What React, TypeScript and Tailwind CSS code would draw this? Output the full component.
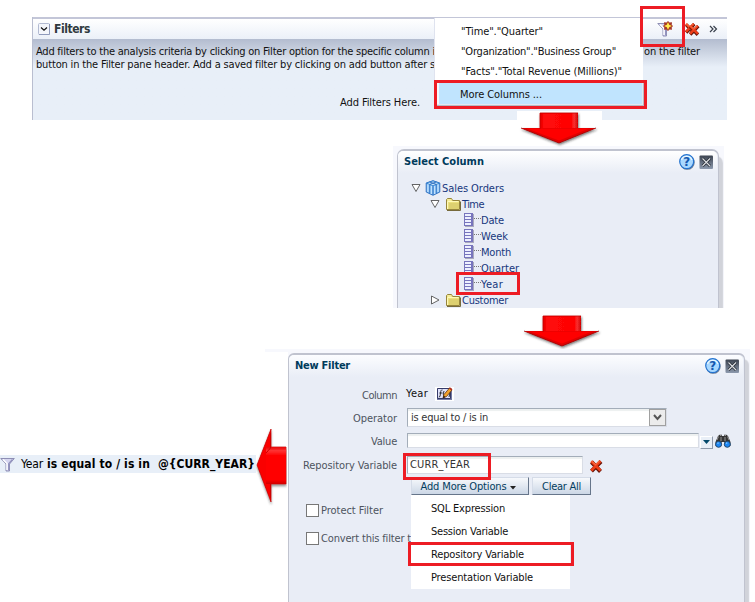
import { useLayoutEffect, useRef, useState } from "react";

type TextProps = { children: string; w: number; className?: string };

/** A single line of text whose tracking is adjusted so that it spans `w` pixels. */
function T({ children, w, className = "" }: TextProps) {
  const ref = useRef<HTMLSpanElement>(null);
  const [tracking, setTracking] = useState(0);
  useLayoutEffect(() => {
    if (ref.current) {
      const natural = ref.current.getBoundingClientRect().width;
      setTracking((w - natural) / children.length);
    }
  }, [w, children]);
  return (
    <span ref={ref} className={`inline-block whitespace-pre ${className}`} style={{ letterSpacing: tracking }}>
      {children}
    </span>
  );
}

function DownArrow({ id }: { id: string }) {
  return (
    <svg width="82" height="36" viewBox="0 0 82 36" className="block">
      <defs>
        <linearGradient id={id} x1="0" x2="1">
          <stop offset="0" stopColor="#e00000" />
          <stop offset="0.1" stopColor="#ff0808" />
          <stop offset="0.83" stopColor="#ff0505" />
          <stop offset="0.9" stopColor="#f83030" />
          <stop offset="1" stopColor="#d00000" />
        </linearGradient>
        <filter id={`${id}s`} x="-10%" y="-10%" width="120%" height="130%">
          <feDropShadow dx="0.8" dy="1.5" stdDeviation="1.2" floodColor="#222" floodOpacity="0.6" />
        </filter>
      </defs>
      <g filter={`url(#${id}s)`}>
        <path d="M2 17H21V2H59V17H77L40 32Z" fill="#e00000" />
        <path d="M21 2H59V17H21Z" fill={`url(#${id})`} />
        <path d="M8 17.500H70L40 29.500Z" fill="#fe0404" />
        <path d="M21 18V2H59" fill="none" stroke="#c40000" strokeWidth=".8" />
        <path d="M2 17L40 32L77 17" fill="none" stroke="#a00000" strokeWidth=".8" />
      </g>
    </svg>
  );
}

function LeftArrow() {
  return (
    <svg width="31" height="78" viewBox="0 0 31 78" className="block">
      <defs>
        <linearGradient id="la" x1="0" x2="0" y1="0" y2="1">
          <stop offset="0" stopColor="#e50000" />
          <stop offset="0.1" stopColor="#ff3434" />
          <stop offset="0.22" stopColor="#ff0505" />
          <stop offset="0.88" stopColor="#ff0303" />
          <stop offset="1" stopColor="#d00000" />
        </linearGradient>
        <filter id="ls" x="-10%" y="-10%" width="120%" height="120%">
          <feDropShadow dx="0" dy="2" stdDeviation="1" floodColor="#333" floodOpacity="0.5" />
        </filter>
      </defs>
      <g filter="url(#ls)">
        <path d="M15 1V19H30V56H15V74L1 37Z" fill="#fa0303" stroke="#c00000" strokeWidth=".7" />
        <path d="M10 19H30V56H10Z" fill="url(#la)" />
        <path d="M14.500 5V20L10 25M14.500 56V70" fill="none" stroke="#d00000" strokeWidth="1" />
      </g>
    </svg>
  );
}

function Funnel({ star = false }: { star?: boolean }) {
  return (
    <svg width="17" height="16" viewBox="0 0 17 16" className="block shrink-0">
      <path d="M.8 2.500H14.300L9.500 8V15H6V8Z" fill="#d6d6f0" stroke="#8585ad" strokeWidth=".9" />
      <path d="M3 3.500L7 7.500V14" fill="none" stroke="#fff" strokeWidth="1.400" />
      <path d="M12.500 3.500L8.700 7.700V14.500" fill="none" stroke="#9494bf" strokeWidth="1.400" />
      {star && (
        <>
          <path d="M11 0L12.500 1.500L15 1.300L14.700 3.700L16 5L14.700 6.500L15 8.700L12.500 8.500L11 10L9.500 8.500L7 8.700L7.300 6.500L6 5L7.300 3.700L7 1.300L9.500 1.500Z" fill="#a5382a" />
          <path d="M11 1L12.200 3.800L15 5L12.200 6.200L11 9L9.800 6.200L7 5L9.800 3.800Z" fill="#ffdb22" />
          <path d="M11 2.700V7.300M8.700 5H13.300" stroke="#fff570" />
        </>
      )}
    </svg>
  );
}

function RedX({ size = 14 }: { size?: number }) {
  return (
    <svg width={size} height={size} viewBox="0 0 14 14" className="block shrink-0">
      <path d="M2.500 3L11.500 12.500M12 2.500L2.500 12.200" stroke="#651408" strokeWidth="4" />
      <path d="M2.300 2.300L11.500 11.500M11.500 2L2.300 11.500" stroke="#ed3d18" strokeWidth="2.800" />
      <path d="M2.500 2L6.500 5.800L10.500 2" fill="none" stroke="#ff8b62" strokeWidth=".9" />
    </svg>
  );
}

function DialogButtons() {
  return (
    <div className="flex gap-[4px]">
      <svg width="16" height="16" viewBox="0 0 16 16">
        <circle cx="8.300" cy="8.400" r="7.400" fill="#6b7d94" />
        <circle cx="7.700" cy="7.600" r="7" fill="#a9d8ff" stroke="#2573cf" strokeWidth="1.200" />
        <path d="M2.500 6a5.500 5.500 0 0 1 10.400 0" fill="none" stroke="#e8f7ff" strokeWidth="1.300" />
        <text x="7.700" y="12" textAnchor="middle" fontSize="12" fontWeight="bold" fontFamily="DejaVu Sans" fill="#1458b0">?</text>
      </svg>
      <svg width="15" height="16" viewBox="0 0 15 16">
        <defs>
          <linearGradient id="closeBg" x1="0" x2="0" y1="0" y2="1">
            <stop stopColor="#3c4350" />
            <stop offset="1" stopColor="#8c99ad" />
          </linearGradient>
        </defs>
        <rect x=".5" y="1.500" width="13.500" height="13.500" rx="1" fill="url(#closeBg)" />
        <path d="M3.500 4.500L11 12M11 4.500L3.500 12" stroke="#242a33" strokeWidth="2.800" />
        <path d="M3.500 4.500L11 12M11 4.500L3.500 12" stroke="#dcdee2" strokeWidth="1.200" />
      </svg>
    </div>
  );
}

function Triangle({ open = true }: { open?: boolean }) {
  return (
    <svg width="10" height="10" viewBox="0 0 10 10" className="shrink-0">
      <path d={open ? "M1 1.500H9L5 8.500Z" : "M1.500 1V9L9 5Z"} fill="#fff" stroke="#555" strokeWidth=".9" />
    </svg>
  );
}

function Folder() {
  return (
    <svg width="15" height="13" viewBox="0 0 15 13" className="shrink-0">
      <path d="M.5 11.500V1.500L1.500 .5H5.500L6.700 2.500H13.500V11.500Z" fill="#ece07c" stroke="#96853c" />
      <path d="M1.500 2H5.500M1.500 11V3.500H12.500" fill="none" stroke="#fff9b8" />
      <path d="M3 5H13V11H3Z" fill="#ddd070" />
      <path d="M1 12.500H14.500V3.500" fill="none" stroke="#766a3c" />
    </svg>
  );
}

function Cube() {
  return (
    <svg width="16" height="16" viewBox="0 0 16 16" className="shrink-0">
      <path d="M8 .7L14.800 3V12L8 15.300L1.200 12V3Z" fill="#82bcf0" stroke="#2469bd" strokeWidth=".9" />
      <path d="M8 1L14.300 3.200L8 5.500L1.700 3.200Z" fill="#e3f5ff" stroke="#2d7dce" strokeWidth=".8" />
      <path d="M8 5.500V15M4.700 2L11.200 4.300V13.500M11.200 2L4.800 4.300V13.500" fill="none" stroke="#2469bd" strokeWidth=".9" />
      <path d="M2.900 4.500V12M6.300 6V14M9.700 6V14M13 4.500V12" stroke="#c8e6ff" strokeWidth="1.200" />
    </svg>
  );
}

function ColumnIcon() {
  return (
    <svg width="17" height="14" viewBox="0 0 17 14" className="shrink-0">
      <path d="M1 1H10V14H1Z" fill="#a9a9bd" />
      <path d="M0 0H9V13H0Z" fill="#7775bd" />
      <path d="M1 1H7V3H1ZM1 4H7V6H1ZM1 7H7V9H1ZM1 10H7V12H1Z" fill="#edf0ff" />
      <path d="M10 5.500H17" stroke="#777" strokeDasharray="1 1" />
    </svg>
  );
}

function EditFormula() {
  return (
    <svg width="19" height="14" viewBox="0 0 19 14" className="block bg-white">
      <path d="M2 1.500H17V13H2Z" fill="#747ba4" />
      <path d="M2.500 1.500H15.500V11.500H2.500Z" fill="#dfe2fb" stroke="#343a69" />
      <path d="M7.500 3C6 2.500 5.800 4 5.500 6L5 9.500L3.800 10M4.300 6H7.500M9 4Q7.500 7 9 10M13 6L10 9.500M14 4Q15.500 7 14 10" fill="none" stroke="#222" strokeWidth=".9" />
      <path d="M8 11L9 7.500L14.500 1L17 3L11.500 9.500Z" fill="#f2a22c" stroke="#633311" strokeWidth=".8" />
      <path d="M14.500 .8L17 2.800" stroke="#b82d1c" strokeWidth="1.500" />
      <path d="M8 11L8.700 8.700L10.500 10Z" fill="#171717" />
    </svg>
  );
}

function Binoculars() {
  return (
    <svg width="16" height="14" viewBox="0 0 16 14" className="block">
      <path d="M3 2L4.500 .7H7V2H9V.7H11.500L13 2L15.500 8V12H9.500V8H6.500V12H.5V8Z" fill="#353535" />
      <path d="M3.500 2.500L2 6M12.500 2.500L14 6M6 3V7M10 3V7M5 1.500H6.500M9.500 1.500H11" stroke="#a1a1a1" strokeWidth=".9" />
      <circle cx="3.600" cy="10.300" r="3" fill="#1c86f5" stroke="#24496d" />
      <circle cx="12.300" cy="10.300" r="3" fill="#1c86f5" stroke="#24496d" />
      <path d="M2.500 9.500L3.500 8.700M11.200 9.500L12.200 8.700" stroke="#8fd0ff" strokeWidth="1.200" />
    </svg>
  );
}

function FiltersPanel() {
  return (
    <section className="relative mt-[17px] ml-[32px] h-[103px] w-[695px] border-l border-[#b9bed0] bg-[#e8eff8]">
      <header className="flex h-[22px] items-center border-t-2 border-[#c3c6d8] bg-gradient-to-b from-white to-[#ebf0f8] pl-[5px]">
        <svg width="12" height="12" viewBox="0 0 12 12">
          <rect x=".5" y=".5" width="11" height="11" rx="1" fill="#f4f6fb" stroke="#b3bbd2" />
          <path d="M1 11.500H11.500V1" fill="none" stroke="#8f9abb" />
          <path d="M3 4.500L6 7.300L9 4.500" fill="none" stroke="#111" strokeWidth="1.200" />
        </svg>
        <T w={36} className="ml-[4px] text-[12px] font-bold text-[#303a40]">Filters</T>
        <div className="ml-auto flex items-center pr-[9px]">
          <Funnel star />
          <span className="ml-[10px] flex w-[17px]">
            <RedX size={12} />
            <span className="mt-[2px] -ml-[8px]"><RedX size={12} /></span>
          </span>
          <svg width="9" height="8" viewBox="0 0 9 8" className="ml-[8px]">
            <path d="M1 1L4 4L1 7M4.500 1L7.500 4L4.500 7" fill="none" stroke="#39404c" strokeWidth="1.200" />
          </svg>
        </div>
      </header>
      <div className="h-[81px] bg-gradient-to-b from-[#b3bccf] to-[#e8eff8] to-[28px] pt-[6px] pl-[3px]">
        <div className="flex h-[13px] items-center">
          <T w={399}>Add filters to the analysis criteria by clicking on Filter option for the specific column i</T>
          <T w={56} className="ml-[209px]">on the filter</T>
        </div>
        <div className="flex h-[13px] items-center">
          <T w={399}>button in the Filter pane header. Add a saved filter by clicking on add button after s</T>
        </div>
        <div className="mt-[25px] ml-[304px] flex h-[14px] items-center">
          <T w={80}>Add Filters Here.</T>
        </div>
      </div>
      {/* Column menu opened from the funnel button */}
      <div className="absolute top-[1px] left-[401px] h-[88px] w-[209px] border-l border-[#dfe3ef] bg-white pt-[4px] pl-[26px]">
        <div className="flex h-[20px] items-center"><T w={82}>"Time"."Quarter"</T></div>
        <div className="flex h-[20px] items-center"><T w={155}>"Organization"."Business Group"</T></div>
        <div className="flex h-[20px] items-center"><T w={161}>"Facts"."Total Revenue (Millions)"</T></div>
      </div>
      <div className="absolute top-[63px] left-[401px] flex h-[29px] w-[213px] items-center border-3 border-[#ed1c24] bg-[#c0e4fe] pl-[23px] shadow-[inset_-1px_-1px_0_#b5bac4,inset_-2px_-2px_0_#e4e8ef,inset_2px_-2px_0_#f4f8fc]">
        <T w={82}>More Columns ...</T>
      </div>
      <div className="absolute -top-[11px] left-[607px] h-[41px] w-[45px] border-3 border-[#ed1c24]" />
    </section>
  );
}

function SelectColumnDialog() {
  return (
    <section className="ml-[393px] h-[162px] w-[331px] overflow-hidden bg-[#f7f8fd] pt-[3px] pl-[4px]">
      <div className="h-[170px] w-[322px] rounded-t-[7px] border border-t-2 border-[#c0c3cf] bg-[#e9edf6] pr-px shadow-[4px_7px_1px_#d1d3da]">
        <header className="flex h-[22px] items-center justify-between rounded-t-[5px] bg-gradient-to-b from-white to-[#e9edf6] pr-[3px] pl-[6px]">
          <T w={80} className="font-bold text-[#003b5c]">Select Column</T>
          <DialogButtons />
        </header>
        <div className="mt-[7px] text-[#17377d]">
          <div className="flex h-[16px] items-center pl-[13px]">
            <Triangle /><span className="ml-[4px] flex"><Cube /></span><T w={62} className="mt-[2px] ml-[1px]">Sales Orders</T>
          </div>
          <div className="flex h-[16px] items-center pl-[32px]">
            <Triangle /><span className="ml-[6px] flex"><Folder /></span><T w={22} className="mt-[2px] ml-[1px]">Time</T>
          </div>
          <Leaf label="Date" w={23} />
          <Leaf label="Week" w={27} />
          <Leaf label="Month" w={30} />
          <Leaf label="Quarter" w={38} />
          <div className="relative">
            <Leaf label="Year" w={22} />
            <div className="absolute -top-[4px] left-[58px] h-[23px] w-[64px] border-3 border-[#ed1c24]" />
          </div>
          <div className="flex h-[16px] items-center pl-[32px]">
            <Triangle open={false} /><span className="ml-[6px] flex"><Folder /></span><T w={46} className="mt-[2px] ml-[1px]">Customer</T>
          </div>
        </div>
      </div>
    </section>
  );
}

function Leaf({ label, w }: { label: string; w: number }) {
  return (
    <div className="flex h-[16px] items-center pl-[66px]">
      <ColumnIcon /><T w={w} className="mt-[2px]">{label}</T>
    </div>
  );
}

function Label({ children, w }: { children: string; w: number }) {
  return (
    <div className="flex w-[108px] shrink-0 justify-end pt-[2px] text-[#4d545e]"><T w={w}>{children}</T></div>
  );
}

const field = "border border-[#d9dde6] border-t-[#a3adb9] border-l-[#a3adb9] bg-white shadow-[inset_0_2px_1px_#edf0f0]";
const button = "flex h-[18px] items-center justify-center border border-t-[#d5dce8] border-l-[#d5dce8] border-r-[#66758a] border-b-[#66758a] bg-gradient-to-b from-[#f7f9fc] to-[#ccd7e6] text-[#043d5e]";

function NewFilterDialog() {
  return (
    <section className="h-[253px] w-[462px] overflow-hidden bg-[#f7f8fd] pt-[4px]">
      <div className="h-[260px] w-[457px] rounded-t-[6px] border border-t-2 border-[#c0c3cf] bg-[#e9edf6] pr-px shadow-[4px_6px_1px_#d1d3da]">
        <header className="flex h-[22px] items-center justify-between rounded-t-[5px] bg-gradient-to-b from-[#fcfdff] to-[#e9edf6] pr-[3px] pl-[6px]">
          <T w={55} className="font-bold text-[#003b5c]">New Filter</T>
          <DialogButtons />
        </header>
        <div className="relative mt-[7px]">
          <div className="flex h-[22px] items-center">
            <Label w={35}>Column</Label>
            <T w={22} className="mb-[3px] ml-[9px]">Year</T>
            <span className="mb-[3px] ml-[7px]"><EditFormula /></span>
          </div>
          <div className="flex h-[23px] items-center">
            <Label w={44}>Operator</Label>
            <div className={`ml-[10px] flex h-[19px] w-[260px] items-center justify-between pl-[3px] ${field}`}>
              <T w={77} className="mt-px text-[#333]">is equal to / is in</T>
              <span className="flex h-[17px] w-[17px] items-center justify-center border border-[#a0a0a0] bg-[#ececec]">
                <svg width="9" height="7" viewBox="0 0 9 7"><path d="M1 1L4.500 5L8 1" fill="none" stroke="#555" strokeWidth="2" /></svg>
              </span>
            </div>
          </div>
          <div className="flex h-[23px] items-center">
            <Label w={26}>Value</Label>
            <div className={`ml-[10px] h-[15px] w-[292px] ${field}`} />
            <span className="mt-[3px] ml-[1px] flex h-[13px] w-[13px] items-center justify-center border border-white border-r-[#8e99ab] border-b-[#8e99ab] bg-[#e9eff7]">
              <svg width="7" height="4"><path d="M0 0H7L3.500 4Z" fill="#04496b" /></svg>
            </span>
            <span className="mt-[1px] ml-[2px]"><Binoculars /></span>
          </div>
          <div className="flex h-[25px] items-center">
            <Label w={94}>Repository Variable</Label>
            <div className={`ml-[10px] flex h-[18px] w-[176px] items-center pl-[2px] ${field}`}>
              <T w={60} className="mt-px text-[#333]">CURR_YEAR</T>
            </div>
            <span className="mt-[2px] ml-[6px]"><RedX /></span>
          </div>
          <div className="flex h-[18px] gap-[3px] pl-[122px]">
            <div className={`w-[118px] gap-[3px] pr-[4px] ${button}`}>
              <T w={86} className="mt-px">Add More Options</T>
              <svg width="6" height="4" className="mt-[3px]"><path d="M0 0H6L3 3.500Z" fill="#222" /></svg>
            </div>
            <div className={`w-[59px] ${button}`}><T w={39} className="mt-px">Clear All</T></div>
          </div>
          <div className="flex items-center pt-[8px] pl-[17px]">
            <span className="h-[13px] w-[13px] border border-[#777] bg-white" />
            <T w={62} className="mt-px ml-[2px] text-[#4d545e]">Protect Filter</T>
          </div>
          <div className="flex items-center pt-[13px] pl-[17px]">
            <span className="h-[13px] w-[13px] border border-[#777] bg-white" />
            <T w={90} className="mt-px ml-[2px] text-[#4d545e]">Convert this filter t</T>
          </div>
          {/* Options menu */}
          <div className="absolute top-[111px] left-[122px] flex h-[94px] w-[159px] flex-col bg-white pt-[2px] pl-[20px]">
            <div className="flex h-[23px] items-center"><T w={74}>SQL Expression</T></div>
            <div className="flex h-[23px] items-center"><T w={77}>Session Variable</T></div>
            <div className="flex h-[23px] items-center"><T w={93}>Repository Variable</T></div>
            <div className="flex h-[23px] items-center"><T w={102}>Presentation Variable</T></div>
            <div className="absolute top-[47px] -left-[3px] h-[24px] w-[166px] border-3 border-[#ed1c24]" />
          </div>
          <div className="absolute top-[69px] left-[114px] h-[27px] w-[88px] border-3 border-[#ed1c24]" />
        </div>
      </div>
    </section>
  );
}

export default function App() {
  return (
    <main className="relative flex h-[602px] w-[755px] flex-col overflow-hidden bg-white font-['DejaVu_Sans_Condensed','DejaVu_Sans',sans-serif] text-[11px] leading-[14px] text-[#111]">
      <FiltersPanel />
      <div className="relative h-[26px] shrink-0">
        <div className="absolute -top-[9px] left-[517px] h-[35px] w-[85px] bg-white pl-[2px]">
          <DownArrow id="arrowTop" />
        </div>
      </div>
      <SelectColumnDialog />
      <div className="flex h-[41px] shrink-0 pt-[6px] pl-[522px]"><DownArrow id="arrowMid" /></div>
      <div className="flex">
        <div className="mt-[106px] flex h-[18px] w-[256px] shrink-0 items-center bg-[#e8eff8] text-[12px] text-black">
          <Funnel />
          <T w={22} className="ml-[4px]">Year</T>
          <T w={103} className="ml-[4px] font-bold">is equal to / is in</T>
          <T w={97} className="ml-[8px] font-bold">{"@{CURR_YEAR}"}</T>
        </div>
        <div className="w-[32px] shrink-0">
          <div className="ml-[9px] h-[3px] bg-[#f7f8fd]" />
          <div className="pt-[76px]"><LeftArrow /></div>
        </div>
        <NewFilterDialog />
      </div>
    </main>
  );
}
